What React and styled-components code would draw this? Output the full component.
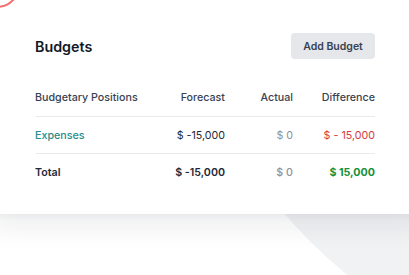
import React from "react";
import styled, { createGlobalStyle } from "styled-components";

const GlobalStyle = createGlobalStyle`
  html, body {
    margin: 0;
    padding: 0;
    background: #ffffff;
  }
  body {
    font-family: Inter, "Noto Sans", "Liberation Sans", sans-serif;
    -webkit-font-smoothing: antialiased;
  }
`;

const Page = styled.div`
  position: relative;
  width: 409px;
  height: 275px;
  overflow: hidden;
  background: #ffffff;
`;

const BackdropCircle = styled.div`
  position: absolute;
  left: 162px;
  top: -618px;
  width: 1006px;
  height: 1006px;
  border-radius: 50%;
  background: #f1f2f4;
`;

const Card = styled.section`
  position: relative;
  box-sizing: border-box;
  width: 441px;
  margin: -20px 0 0 -12px;
  padding: 53px 54px 23px 47px;
  background: #ffffff;
  border-radius: 12px;
  box-shadow: 0 12px 28px rgba(17, 24, 39, 0.08), 0 2px 6px rgba(17, 24, 39, 0.04);
`;

const Ring = styled.div`
  position: absolute;
  left: -14px;
  top: -18px;
  width: 46px;
  height: 46px;
  box-sizing: border-box;
  border-radius: 50%;
  border: 2px solid #f36f6f;
`;

const Header = styled.div`
  display: flex;
  align-items: center;
  justify-content: space-between;
  height: 26px;
`;

const Title = styled.h2`
  margin: 0;
  font-size: 14.3px;
  font-weight: 600;
  color: #111827;
`;

const Button = styled.button`
  width: 84px;
  height: 26px;
  padding: 0;
  border: none;
  border-radius: 4px;
  background: #e5e7eb;
  color: #374151;
  font-family: inherit;
  font-size: 10.5px;
  font-weight: 600;
  cursor: pointer;
`;

const Table = styled.div`
  margin-top: 19px;
`;

const Row = styled.div`
  display: grid;
  grid-template-columns: 1fr 70px 68px 82px;
  align-items: center;
  height: ${(p) => p.h}px;
  border-top: ${(p) => (p.divided ? "1px solid #e8eaee" : "none")};
  margin-left: ${(p) => (p.divided ? "1px" : "0")};
`;

const Cell = styled.div`
  font-size: 10.7px;
  font-weight: ${(p) => p.weight || 400};
  color: ${(p) => p.color || "#1f2937"};
  text-align: ${(p) => (p.left ? "left" : "right")};
  white-space: nowrap;
  margin-left: ${(p) => (p.left && p.shift ? "-1px" : "0")};
`;

const HeadCell = styled(Cell)`
  font-weight: 500;
  color: #374151;
`;

export default function App() {
  return (
    <>
      <GlobalStyle />
      <Page>
        <BackdropCircle />
        <Card>
          <Ring />
          <Header>
            <Title>Budgets</Title>
            <Button>Add Budget</Button>
          </Header>
          <Table>
            <Row h={38}>
              <HeadCell left>Budgetary Positions</HeadCell>
              <HeadCell>Forecast</HeadCell>
              <HeadCell>Actual</HeadCell>
              <HeadCell>Difference</HeadCell>
            </Row>
            <Row h={36} divided>
              <Cell left shift color="#258d8d" weight={500}>Expenses</Cell>
              <Cell>$ -15,000</Cell>
              <Cell color="#8e9095">$ 0</Cell>
              <Cell color="#d63c3c">$ - 15,000</Cell>
            </Row>
            <Row h={37} divided>
              <Cell left shift weight={600} color="#1f2937">Total</Cell>
              <Cell weight={600} color="#1f2937">$ -15,000</Cell>
              <Cell weight={500} color="#8e9095">$ 0</Cell>
              <Cell weight={700} color="#17903a">$ 15,000</Cell>
            </Row>
          </Table>
        </Card>
      </Page>
    </>
  );
}
